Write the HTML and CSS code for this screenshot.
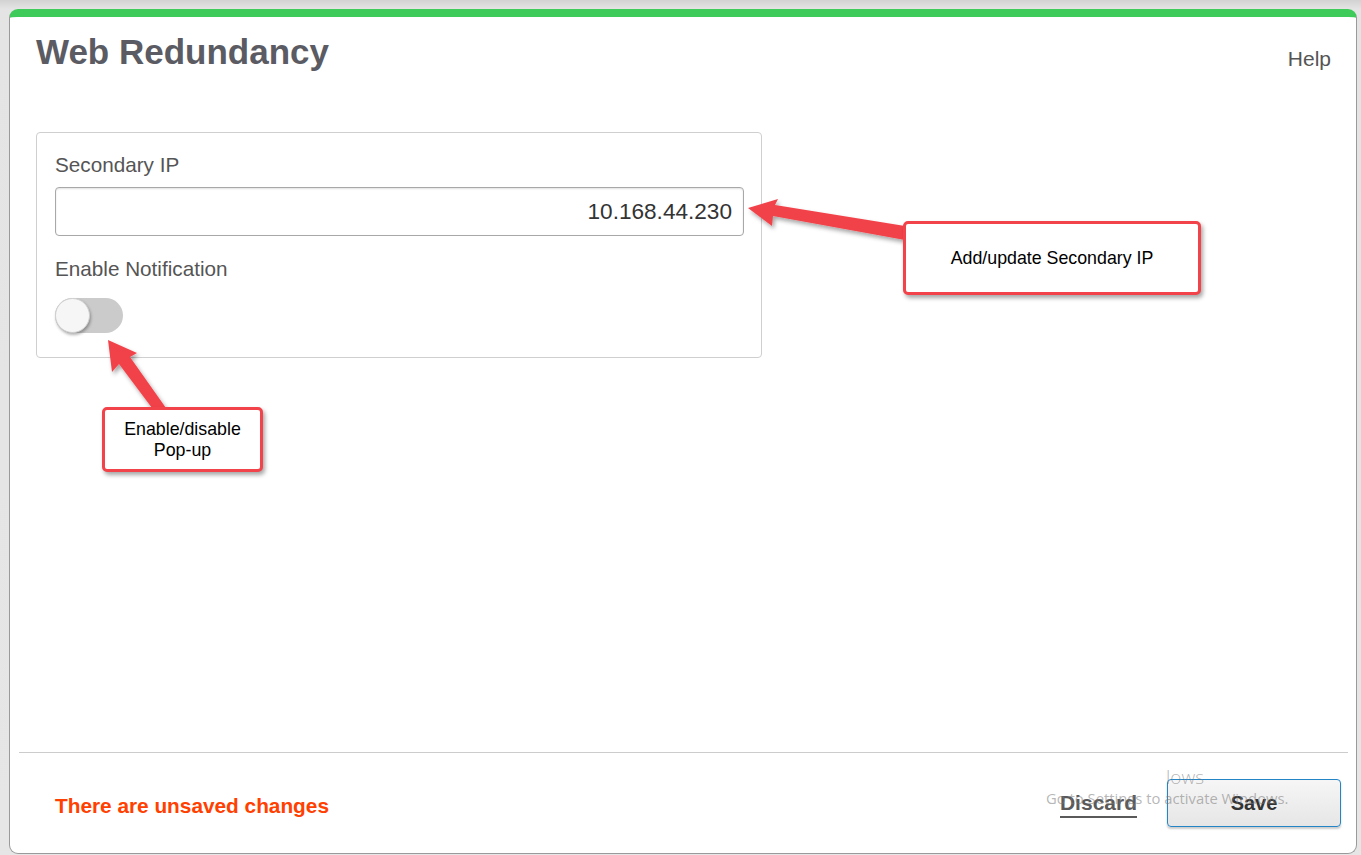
FILE: index.html
```html
<!DOCTYPE html>
<html lang="en">
<head>
<meta charset="utf-8">
<title>Web Redundancy</title>
<link rel="stylesheet" href="styles.css">
</head>
<body>
<div class="panel">
  <header class="head">
    <h1 class="title">Web Redundancy</h1>
    <a class="help">Help</a>
  </header>
  <section class="card">
    <label class="label">Secondary IP</label>
    <div class="input">10.168.44.230</div>
    <label class="label label-gap">Enable Notification</label>
    <div class="toggle"><span class="knob"></span></div>
  </section>
  <div class="spacer"></div>
  <footer class="foot">
    <span class="unsaved">There are unsaved changes</span>
    <div class="actions">
      <a class="discard">Discard</a>
      <button class="save">Save</button>
    </div>
  </footer>
</div>

<svg class="arrows" width="1361" height="855" viewBox="0 0 1361 855">
  <defs>
    <filter id="sh" x="-20%" y="-20%" width="140%" height="140%">
      <feDropShadow dx="2" dy="3" stdDeviation="2" flood-color="#000" flood-opacity="0.35"/>
    </filter>
  </defs>
  <polygon filter="url(#sh)" fill="#f2434a" points="748,208 778,199 775,205 905,226 905,240 773,216 772,226"/>
  <polygon filter="url(#sh)" fill="#f2434a" points="108,340 137,353 130,357 166,408 152,408 119,364 112,372"/>
</svg>

<div class="callout callout-ip">Add/update Secondary IP</div>
<div class="callout callout-pop">Enable/disable<br>Pop-up</div>

<div class="watermark">
  <span class="wm-big">lows</span>
  <span class="wm-small">Go to Settings to activate Windows.</span>
</div>
</body>
</html>
```
FILE: styles.css
```css
* { box-sizing: border-box; }
html, body { margin: 0; padding: 0; }
body {
  width: 1361px;
  height: 855px;
  background: linear-gradient(#d2d2d2 0, #e4e4e4 9px, #e6e6e6 100%);
  font-family: "Liberation Sans", Arial, sans-serif;
  position: relative;
  overflow: hidden;
  padding: 9px 4px 1px 9px;
}
.panel {
  height: 845px;
  background: #fff;
  border: 1px solid #9a9a9a;
  border-top: 8px solid #3ecb5a;
  border-radius: 9px 9px 9px 9px;
  display: flex;
  flex-direction: column;
}
.head {
  display: flex;
  justify-content: space-between;
  align-items: flex-start;
  padding: 15px 25px 0 26px;
}
.title {
  margin: 0;
  font-size: 35px;
  line-height: 40px;
  font-weight: bold;
  color: #5b5b63;
}
.help {
  margin-top: 15px;
  font-size: 21px;
  line-height: 24px;
  color: #555;
}
.card {
  margin: 60px 0 0 26px;
  width: 726px;
  height: 226px;
  border: 1px solid #cfcfcf;
  border-radius: 4px;
  padding: 20px 17px 0 18px;
  display: flex;
  flex-direction: column;
  align-items: flex-start;
}
.label {
  font-size: 20.7px;
  line-height: 24px;
  color: #555;
}
.input {
  margin-top: 10px;
  width: 689px;
  height: 49px;
  border: 1px solid #a8a8a8;
  border-radius: 4px;
  box-shadow: inset 0 1px 2px rgba(0,0,0,0.12);
  font-size: 22.6px;
  line-height: 47px;
  color: #333;
  text-align: right;
  padding-right: 11px;
}
.label-gap { margin-top: 21px; }
.toggle {
  margin-top: 17px;
  width: 68px;
  height: 35px;
  border-radius: 18px;
  background: #cbcbcb;
  position: relative;
}
.knob {
  position: absolute;
  left: 0;
  top: 0;
  width: 35px;
  height: 35px;
  border-radius: 50%;
  background: #f6f6f6;
  border: 1px solid #d0d0d0;
  box-shadow: 1px 2px 3px rgba(0,0,0,0.3);
}
.spacer { flex: 1; }
.foot {
  margin: 0 8px 0 9px;
  border-top: 1px solid #cccccc;
  height: 101px;
  display: flex;
  align-items: center;
  justify-content: space-between;
  padding: 0 7px 0 36px;
}
.unsaved {
  font-size: 20.8px;
  font-weight: bold;
  color: #ff4000;
  margin-top: 6px;
}
.actions {
  display: flex;
  align-items: center;
  gap: 30px;
}
.discard {
  font-size: 21px;
  font-weight: bold;
  color: #5a5a5a;
  border-bottom: 2px solid #5a5a5a;
  line-height: 22px;
  padding-bottom: 2px;
  margin-top: 4px;
}
.save {
  width: 174px;
  height: 48px;
  border: 1px solid #2384c6;
  border-radius: 4px;
  background: linear-gradient(#f6f6f6, #e6e6e6);
  box-shadow: 0 2px 2px rgba(0,0,0,0.2);
  font-family: "Liberation Sans", Arial, sans-serif;
  font-size: 20px;
  font-weight: bold;
  color: #333;
}
.arrows {
  position: absolute;
  left: 0;
  top: 0;
  pointer-events: none;
}
.callout {
  position: absolute;
  background: #fff;
  border: 3px solid #f2434a;
  border-radius: 5px;
  box-shadow: 2px 3px 4px rgba(0,0,0,0.35);
  font-family: "Liberation Sans", Arial, sans-serif;
  font-size: 17.8px;
  line-height: 21px;
  color: #000;
  display: flex;
  align-items: center;
  justify-content: center;
  text-align: center;
}
.callout-ip {
  left: 903px;
  top: 221px;
  width: 298px;
  height: 74px;
  padding-top: 1px;
}
.callout-pop {
  left: 102px;
  top: 407px;
  width: 161px;
  height: 65px;
}
.watermark {
  position: absolute;
  left: 1046px;
  top: 766px;
  font-family: "Open Sans", sans-serif;
  color: rgba(120,120,120,0.55);
  pointer-events: none;
}
.wm-big {
  display: block;
  margin-left: 120px;
  font-size: 19px;
  line-height: 22px;
  font-weight: 300;
}
.wm-small {
  display: block;
  font-size: 14.8px;
  line-height: 20px;
  white-space: nowrap;
}
```
